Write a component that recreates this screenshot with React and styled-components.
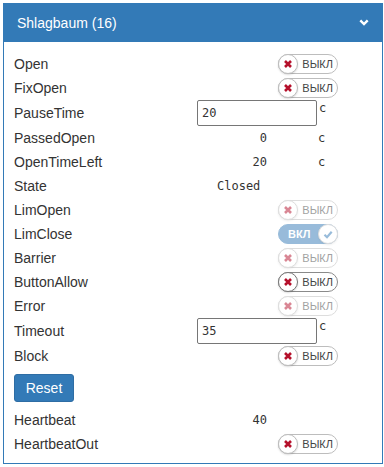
import React from "react";
import styled, { createGlobalStyle, css } from "styled-components";

const GlobalStyle = createGlobalStyle`
  body {
    margin: 0;
    padding: 3px 2px 0 3px;
    background: #fff;
    font-family: "Liberation Sans", Arial, sans-serif;
    color: #333;
  }
`;

const Panel = styled.div`
  width: 380px;
  box-sizing: border-box;
  border: 1px solid #337ab7;
  border-top: 0;
  background: #fff;
`;

const Header = styled.div`
  height: 39px;
  background: #337ab7;
  color: #fff;
  display: flex;
  align-items: center;
  justify-content: space-between;
  padding: 0 14px 0 14px;
  margin: 0 -1px;
  font-size: 14px;
`;

const Body = styled.div`
  padding: 10px 10px 7px 10px;
`;

const Row = styled.div`
  display: flex;
  align-items: center;
  height: ${p => p.h || 24}px;
  font-size: 14px;
`;

const Label = styled.div`
  width: 183px;
  flex: none;
`;

const ValueCell = styled.div`
  width: 141px;
  display: flex;
  align-items: ${p => (p.top ? "flex-start" : "center")};
  justify-content: ${p => (p.end ? "flex-end" : "flex-start")};
`;

const Mono = styled.span`
  font-family: "DejaVu Sans Mono", monospace;
  font-size: 12px;
  color: #333;
`;

const NumBox = styled(Mono)`
  width: ${p => p.w || 70}px;
  text-align: ${p => p.align || "right"};
  padding-left: ${p => p.pl || 0}px;
  box-sizing: border-box;
`;

const Unit = styled(Mono)`
  margin-left: ${p => p.ml || 0}px;
  margin-top: ${p => p.mt || 0}px;
`;

const Input = styled.input`
  width: 120px;
  height: 26px;
  box-sizing: border-box;
  border: 1px solid #767676;
  border-radius: 2px;
  padding: 0 4px;
  font-family: "DejaVu Sans Mono", monospace;
  font-size: 12px;
  color: #333;
  outline: none;
`;

const Switch = styled.div`
  position: relative;
  width: 60px;
  height: 20px;
  box-sizing: border-box;
  border: 1px solid ${p => (p.focus ? "#8a8a8a" : "#bdbdbd")};
  border-radius: 10px;
  display: flex;
  align-items: center;
  font-size: 11px;
  opacity: ${p => (p.disabled ? 0.5 : 1)};
  ${p =>
    p.on &&
    css`
      background: #337ab7;
      border-color: #337ab7;
    `}
`;

const SwitchText = styled.span`
  position: absolute;
  top: 2px;
  ${p => (p.on ? "left: 9px;" : "right: 4px;")}
  color: ${p => (p.on ? "#fff" : "#444")};
  font-weight: ${p => (p.on ? "bold" : "normal")};
  line-height: 14px;
`;

const Knob = styled.span`
  position: absolute;
  top: -1px;
  ${p => (p.on ? "right: -1px;" : "left: -1px;")}
  width: 20px;
  height: 20px;
  box-sizing: border-box;
  border-radius: 50%;
  background: #fff;
  border: 1px solid ${p => (p.focus ? "#777" : "#bdbdbd")};
  box-shadow: 0 1px 2px rgba(0, 0, 0, 0.15);
  display: flex;
  align-items: center;
  justify-content: center;
`;

const ResetButton = styled.button`
  margin: 6px 0 6px 0;
  width: 60px;
  height: 28px;
  background: #337ab7;
  border: 1px solid #2e6da4;
  border-radius: 3px;
  color: #fff;
  font-family: "Liberation Sans", Arial, sans-serif;
  font-size: 14px;
  padding: 0;
`;

const Cross = () => (
  <svg width="8" height="8" viewBox="0 0 8 8">
    <path d="M1 1 L7 7 M7 1 L1 7" stroke="#b5102b" strokeWidth="2.6" />
  </svg>
);

const Check = () => (
  <svg width="10" height="9" viewBox="0 0 10 9">
    <path d="M1.5 4.8 L4 7.2 L8.7 1.8" fill="none" stroke="#337ab7" strokeWidth="2.2" />
  </svg>
);

const Chevron = () => (
  <svg width="10" height="7" viewBox="0 0 10 7">
    <path d="M1.3 1.3 L5 5 L8.7 1.3" fill="none" stroke="#fff" strokeWidth="2.4" />
  </svg>
);

const Toggle = ({ on, disabled, focus }) => (
  <Switch on={on} disabled={disabled} focus={focus}>
    <SwitchText on={on}>{on ? "ВКЛ" : "ВЫКЛ"}</SwitchText>
    <Knob on={on} focus={focus}>{on ? <Check /> : <Cross />}</Knob>
  </Switch>
);

const ToggleRow = ({ label, ...rest }) => (
  <Row>
    <Label>{label}</Label>
    <ValueCell end>
      <Toggle {...rest} />
    </ValueCell>
  </Row>
);

const InputRow = ({ label, value }) => (
  <Row h={26}>
    <Label>{label}</Label>
    <ValueCell top>
      <Input defaultValue={value} />
      <Unit ml={2} mt={1}>c</Unit>
    </ValueCell>
  </Row>
);

const NumRow = ({ label, value, unit }) => (
  <Row>
    <Label>{label}</Label>
    <ValueCell>
      <NumBox>{value}</NumBox>
      {unit && <Unit ml={51}>{unit}</Unit>}
    </ValueCell>
  </Row>
);

export default function App() {
  return (
    <>
      <GlobalStyle />
      <Panel>
        <Header>
          <span>Shlagbaum (16)</span>
          <Chevron />
        </Header>
        <Body>
          <ToggleRow label="Open" />
          <ToggleRow label="FixOpen" />
          <InputRow label="PauseTime" value="20" />
          <NumRow label="PassedOpen" value="0" unit="c" />
          <NumRow label="OpenTimeLeft" value="20" unit="c" />
          <Row>
            <Label>State</Label>
            <ValueCell>
              <NumBox align="left" pl={20} w={120}>Closed</NumBox>
            </ValueCell>
          </Row>
          <ToggleRow label="LimOpen" disabled />
          <ToggleRow label="LimClose" on disabled />
          <ToggleRow label="Barrier" disabled />
          <ToggleRow label="ButtonAllow" focus />
          <ToggleRow label="Error" disabled />
          <InputRow label="Timeout" value="35" />
          <ToggleRow label="Block" />
          <ResetButton>Reset</ResetButton>
          <NumRow label="Heartbeat" value="40" />
          <ToggleRow label="HeartbeatOut" />
        </Body>
      </Panel>
    </>
  );
}
